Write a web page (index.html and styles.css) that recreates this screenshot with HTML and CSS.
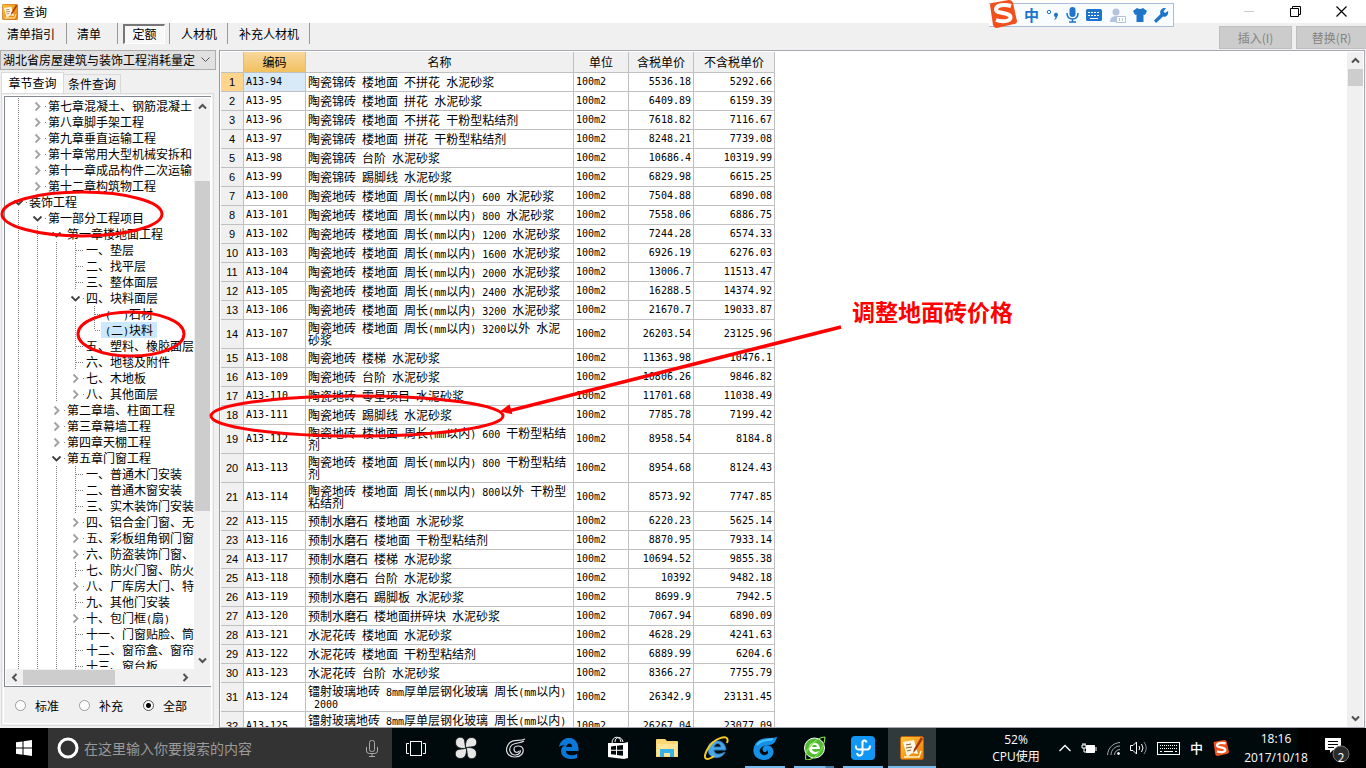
FILE: index.html
```html
<!DOCTYPE html>
<html lang="zh-CN">
<head>
<meta charset="utf-8">
<title>查询</title>
<link rel="stylesheet" href="styles.css">
</head>
<body>
<svg class="defs" aria-hidden="true">
  <defs>
    <linearGradient id="gold" x1="0" y1="0" x2="1" y2="1"><stop offset="0" stop-color="#ffc43a"/><stop offset="1" stop-color="#e97a06"/></linearGradient>
    <symbol id="app" viewBox="0 0 24 24">
      <rect x="0.5" y="0.5" width="23" height="23" rx="2" fill="url(#gold)" stroke="#b9600a"/>
      <path d="M3 6l11-2 4 14-6-1-5 4z" fill="#fff8e6"/>
      <path d="M6 9l5-1M6 12l6-1M7 15l4-1" stroke="#8a5a2a" stroke-width="1"/>
      <path d="M4 21h15l2-6" stroke="#fff3c0" stroke-width="1.5" fill="none"/>
      <path d="M21 1l-7 12-1 4 3-3 7-11z" fill="#a8350a"/>
    </symbol>
    <symbol id="sogou" viewBox="0 0 28 28">
      <path d="M1 5Q1 3 3 3L20 0q3 0 4 3l4 18q0 3-3 3L8 28q-3 0-4-3z" fill="#f1501b"/>
      <path d="M22 6C15 4 7 5 7 9.500S21 12 21.500 17 12 22 7 20" fill="none" stroke="#fff" stroke-width="4"/>
    </symbol>
    <symbol id="up" viewBox="0 0 9 9"><path d="M1 6.500L4.500 3 8 6.500" fill="none" stroke="#505050" stroke-width="2"/></symbol>
    <symbol id="down" viewBox="0 0 9 9"><path d="M1 2.500L4.500 6 8 2.500" fill="none" stroke="#505050" stroke-width="2"/></symbol>
    <symbol id="left" viewBox="0 0 9 9"><path d="M6.500 1L3 4.500 6.500 8" fill="none" stroke="#505050" stroke-width="2"/></symbol>
    <symbol id="right" viewBox="0 0 9 9"><path d="M2.500 1L6 4.500 2.500 8" fill="none" stroke="#505050" stroke-width="2"/></symbol>
  </defs>
</svg>

<header class="titlebar">
  <svg class="app-icon"><use href="#app"/></svg>
  <h1>查询</h1>
  <div class="window-buttons">
    <button aria-label="最小化"><svg width="11" height="11"><path d="M0 5.500h10" stroke="#ccc"/></svg></button>
    <button aria-label="还原"><svg width="11" height="11" fill="none" stroke="#000"><path d="M.5 2.500h8v8h-8zM2.500 2.500v-2h8v8h-2"/></svg></button>
    <button aria-label="关闭"><svg width="11" height="11"><path d="M.5.5l10 10M10.500.5l-10 10" stroke="#000" stroke-width="1.200"/></svg></button>
  </div>
</header>

<nav class="toolbar">
  <div class="modes">
    <div class="mode wide"><button>清单指引</button></div>
    <div class="mode"><button>清单</button></div>
    <div class="mode on"><button>定额</button></div>
    <div class="mode"><button>人材机</button></div>
    <div class="mode"><button>补充人材机</button></div>
  </div>
  <div class="actions">
    <button disabled>插入(I)</button>
    <button disabled>替换(R)</button>
  </div>
</nav>

<main>
  <aside>
    <div class="combo">
      <select aria-label="定额库"><option>湖北省房屋建筑与装饰工程消耗量定</option></select>
      <svg width="9" height="6"><path d="M.5.5l4 4 4-4" fill="none" stroke="#555"/></svg>
    </div>
    <div class="tabs"><button class="on">章节查询</button><button>条件查询</button></div>
    <section class="panel">
      <div class="treebox">
        <div class="tree" id="tree"></div>
        <div class="vbar">
          <svg class="arrow"><use href="#up"/></svg>
          <div class="track"><div class="space-a"></div><div class="thumb"></div><div class="space-b"></div></div>
          <svg class="arrow"><use href="#down"/></svg>
        </div>
        <div class="hbar"><svg class="arrow"><use href="#left"/></svg><div class="track"><div class="thumb"></div></div><svg class="arrow"><use href="#right"/></svg></div>
      </div>
      <div class="scope">
        <label><input type="radio" name="scope">标准</label>
        <label><input type="radio" name="scope">补充</label>
        <label><input type="radio" name="scope" checked>全部</label>
      </div>
    </section>
  </aside>
  <section class="grid">
    <div class="sheet">
      <table>
        <colgroup><col class="c-no"><col class="c-code"><col class="c-name"><col class="c-unit"><col class="c-tax"><col class="c-net"></colgroup>
        <thead><tr><th></th><th class="on">编码</th><th>名称</th><th>单位</th><th>含税单价</th><th>不含税单价</th></tr></thead>
        <tbody id="rows"></tbody>
      </table>
    </div>
    <div class="vbar">
      <svg class="arrow"><use href="#up"/></svg>
      <div class="track"><div class="thumb"></div></div>
      <svg class="arrow"><use href="#down"/></svg>
    </div>
  </section>
</main>

<footer class="taskbar">
  <button class="start" aria-label="开始"><svg width="16" height="16" fill="#fff"><path d="M0 2.300L6.500 1.400V7.500H0zM7.500 1.200L16 0v7.500H7.500zM0 8.500h6.500v6.200L0 13.800zM7.500 8.500H16V16l-8.500-1.200z"/></svg></button>
  <div class="search">
    <svg width="22" height="22"><circle cx="11" cy="11" r="9" fill="none" stroke="#fff" stroke-width="3"/></svg>
    <input type="text" aria-label="搜索" placeholder="在这里输入你要搜索的内容">
    <svg width="12" height="17" fill="none" stroke="#aaa"><rect x="3.500" y=".5" width="5" height="11" rx="2"/><path d="M.5 7v4q0 2.500 3 2.500h5q3 0 3-2.500V7M6 13.500v3M3 16.500h6"/></svg>
  </div>
  <div class="tools">
    <button aria-label="任务视图"><svg width="20" height="15" fill="none" stroke="#fff"><rect x="4.500" y=".5" width="11" height="14"/><path d="M3 2.500H.5v10H3M17 2.500h2.500v10H17"/></svg></button>
    <button aria-label="花瓣"><svg width="22" height="22" viewBox="0 0 22 22" fill="#e6e6e6" stroke="#000a0d" stroke-width=".8"><path d="M11 11C9 12 0 12 .5 5 1 0 5 0 7 .5 11 2 9 7 11 11z"/><path d="M11 11C10 9 10 0 17 .5c5 .5 5 4.500 4.500 6.500C20 11 15 9 11 11z"/><path d="M11 11c2-1 11-1 10.500 6-.5 5-4.500 5-6.500 4.500C11 20 13 15 11 11z"/><path d="M11 11c1 2 1 11-6 10.500C0 21 0 17 .5 15 2 11 7 13 11 11z"/></svg></button>
    <button aria-label="广联达"><svg width="20" height="20" fill="none" stroke="#ddd" stroke-width="1.200"><path d="M19 1C13 4 6 0 2 7s1 12 7 12 9-4 8-8-9-4-9 0 4 4 5 2M18 3c-4 3-10 1-13 5s0 9 4 9 6-3 5-5"/></svg></button>
  </div>
  <div class="apps">
    <button aria-label="Edge"><svg width="20" height="21"><path d="M0 9C2-3 19-4 19.500 11v2H7c0 5 7 5 11 3v4C9 23 2 19 2 13c0-3 2-5 4-6-3 0-5 1-6 2zm7 0h6c0-5-5-4-6 0z" fill="#0a78d7"/></svg></button>
    <button aria-label="应用商店"><svg width="22" height="24"><path d="M1 7h16l4-1v16l-4 1-16-2z" fill="#fff"/><path d="M5 7c0-7 8-8 9-1M8 6c0-6 7-6 8 0" fill="none" stroke="#fff"/><path d="M4 10.500l5-.7v4H4zM10 9.700l6-.8v4.900h-6zM4 14.800h5v4L4 18.200zM10 14.800h6v4.900l-6-.8z" fill="#000a0d"/></svg></button>
    <button aria-label="文件资源管理器"><svg width="22" height="19"><path d="M0 1q0-1 1-1h8l2 2h10q1 0 1 1v15H0z" fill="#fbd873"/><path d="M1 5h20v12H1z" fill="#ffe597"/><path d="M4 18V10h14v8h-4v-4H8v4z" fill="#38b0e8"/></svg></button>
    <button aria-label="Internet Explorer"><svg width="25" height="24"><path d="M4 13C4 3 21 1 22 14H10c0 5 6 5 11 2-3 8-17 8-17-3zm6-2h7c-1-5-6-4-7 0z" fill="#48a9e6" stroke="#2b79bd"/><path d="M23 7C27-4 9 2 3 14c-5 10 0 11 7 6" fill="none" stroke="#f4c82b" stroke-width="2"/></svg></button>
    <button class="running" aria-label="广联达服务"><svg width="24" height="23"><path d="M24 0C18 2 8-1 3 6s-3 16 7 17 14-10 7-14c-4-2-9 1-7 5 1 2 4 1 4-1 3 3-1 6-4 5-8-4 0-11 6-10 4 0 7-3 8-8z" fill="#1590e8"/><path d="M4 8c4-6 11-4 16-6" stroke="#46c4ff" stroke-width="2" fill="none"/></svg></button>
    <button class="running split" aria-label="360浏览器"><svg width="23" height="24"><circle cx="11.500" cy="12" r="10" fill="#52b931" stroke="#fff"/><path d="M6 12c0-7 11-7 11 1H9c1 4 5 3 7 2-2 5-10 4-10-3zm3-1h5c-1-3-4-3-5 0z" fill="#fff"/><path d="M3 24C0 14 14 1 22 1M3 24c9 0 18-10 19-23" fill="none" stroke="#7be34a" stroke-width="1.200"/></svg></button>
    <button class="running" aria-label="云计价"><svg width="24" height="24"><rect width="24" height="24" rx="4" fill="#1296f5"/><path d="M15.500 6.500Q15 4 13 4.500T11.500 8v8q0 3-2.500 3.500T6 17M5 9.500q-1 4 3 4h8q3 0 3-4" fill="none" stroke="#fff" stroke-width="2"/></svg></button>
    <button class="running current" aria-label="查询"><svg width="24" height="24"><use href="#app"/></svg></button>
  </div>
  <div class="tray">
    <div class="stat">52%<br>CPU使用</div>
    <div class="icons">
      <svg width="12" height="8"><path d="M.5 7L6 1.500 11.500 7" fill="none" stroke="#fff" stroke-width="1.300"/></svg>
      <svg width="16" height="12"><path d="M5.500 3.500h8v7h-8z" fill="#fff" stroke="#fff"/><path d="M15 5v4M1 3h4v3H1zM2 1v2M4 1v2M3 6v4h3" fill="none" stroke="#fff"/></svg>
      <svg width="13" height="13" fill="none" stroke="#aaa"><path d="M.5 13C1 6 6 1 13 .5M4 13c0-5 4-9 9-9M7.500 13c0-3 2.500-5.500 5.500-5.500"/><circle cx="11.500" cy="11.500" r="1" fill="#fff" stroke="#fff"/></svg>
      <svg width="17" height="14" fill="none" stroke="#fff"><path d="M.5 4.500H3L6.500 1v12L3 9.500H.5zM9 5q1.500 2 0 4M11.500 3q3 4 0 8"/><path d="M14 1q4.500 6 0 12" stroke="#888"/></svg>
      <svg width="23" height="13" fill="none" stroke="#fff"><rect x=".5" y=".5" width="22" height="12"/><path d="M3 3.500h17M3 6.500h17" stroke-dasharray="1 1"/><path d="M3 9.500h2M7 9.500h9M18 9.500h2"/></svg>
      <span class="lang">中</span>
      <svg width="16" height="16"><use href="#sogou"/></svg>
    </div>
    <div class="stat clock">18:16<br>2017/10/18</div>
    <button class="notice" aria-label="通知"><svg width="26" height="26"><path d="M0 0h16v12H8l-3 3v-3H0z" fill="#fff"/><path d="M3 3.500h10M3 6.500h10M3 9.500h6" stroke="#000"/><circle cx="16" cy="16" r="8" fill="#2b2b2b" stroke="#777"/></svg><span>2</span></button>
  </div>
</footer>

<div class="ime">
  <svg class="ime-logo"><use href="#sogou"/></svg>
  <span class="ime-lang">中</span>
  <svg width="13" height="12"><circle cx="3" cy="3" r="1.700" fill="none" stroke="#1e74c9"/><path d="M8 6a2 2 0 1 1 3.500 1Q11 10 8 11q1.500-2 1.500-3Q8 8 8 6z" fill="#1e74c9"/></svg>
  <svg width="13" height="16"><rect x="3.500" width="6" height="10" rx="3" fill="#1e74c9"/><path d="M1 6q0 6 5.500 6T12 6M6.500 12v3M3 15h7" fill="none" stroke="#1e74c9" stroke-width="1.500"/></svg>
  <svg width="17" height="12"><rect width="16" height="12" rx="1.500" fill="#1e74c9"/><path d="M2 3.500h12M2 6.500h12" stroke="#fff" stroke-dasharray="2 1"/><path d="M4 9.500h8" stroke="#fff"/></svg>
  <svg width="16" height="15"><circle cx="6" cy="4" r="3.500" fill="#b4c3dc"/><path d="M0 14q0-6 6-6 4 0 5 2v4z" fill="#b4c3dc"/><path d="M6.500 8.500h9v6h-9z" fill="#fff" stroke="#b4c3dc"/><path d="M9.500 10v3M12.500 10v3" stroke="#b4c3dc"/></svg>
  <svg width="14" height="14"><path d="M4 0q3 2 6 0l4 3-2 4-1.500-.5V14h-7V6.500L2 7 0 3z" fill="#1e74c9"/></svg>
  <svg width="15" height="15"><path d="M14 3l-3 2-1.500-1.500L12 0C8-1 5 3 6.500 6L0 12.500 2 15l7-6.500c3 1 6-1.500 5-5.500z" fill="#1e74c9"/></svg>
</div>

<svg class="marks" aria-hidden="true" fill="none" stroke="#f00" stroke-width="3">
  <ellipse cx="82" cy="214" rx="80" ry="22"/>
  <ellipse cx="131" cy="334" rx="53" ry="22"/>
  <ellipse cx="357" cy="416" rx="146" ry="20"/>
  <path d="M841 327L508 411" stroke-width="3.500"/>
  <path d="M502 411l7-5 2 7z" fill="#f00" stroke-width="2"/>
</svg>
<p class="note">调整地面砖价格</p>
<script src="app.js"></script>
</body>
</html>
```
FILE: styles.css
```css
* { box-sizing: border-box; }
body { margin: 0; height: 100vh; display: flex; flex-direction: column; overflow: hidden; background: #f0f0f0; color: #000; font: 12px/16px "Noto Sans CJK SC", sans-serif; }
button, input, select { font: inherit; color: inherit; margin: 0; padding: 0; border: 0; background: none; }
svg { display: block; flex: none; }
.defs { position: absolute; width: 0; height: 0; }

.titlebar { display: flex; align-items: center; height: 23px; padding: 0 2px; background: #fff; gap: 5px; }
.titlebar h1 { margin: 0; font: 12px/16px "Noto Sans CJK SC", sans-serif; }
.app-icon { width: 16px; height: 16px; }
.window-buttons { margin-left: auto; display: flex; }
.window-buttons button { width: 46px; height: 20px; display: grid; place-items: center; }

.toolbar { display: flex; justify-content: space-between; height: 27px; }
.modes { display: flex; height: 21px; }
.mode { padding: 0 16px 0 10px; border-right: 1px solid #999; display: flex; align-items: center; }
.mode.wide { padding: 0 11px 0 7px; }
.mode.on { padding: 0 4px 0 5px; }
.mode.on button { width: 42px; height: 20px; border: 1px solid #fff; border-top: 2px solid #777; border-left: 2px solid #777; background: #f8f8f8; }
.mode.on ~ .mode { padding: 0 10px 0 11px; }
.actions { display: flex; gap: 4px; padding-top: 3px; }
.actions button { width: 73px; height: 23px; border: 1px solid #bfbfbf; background: #ccc; color: #838383; }
.actions button:last-child { width: 70px; border-right: 0; }

main { flex: 1; min-height: 0; display: flex; gap: 3px; }
aside { width: 216px; display: flex; flex-direction: column; min-height: 0; }
.combo { height: 20px; border: 1px solid #adadad; background: #e1e1e1; display: flex; align-items: center; padding: 0 5px 0 2px; }
.combo select { appearance: none; flex: 1; min-width: 0; height: 18px; outline: 0; }
.tabs { display: flex; align-items: flex-end; height: 23px; padding-left: 1px; }
.tabs button { width: 57px; height: 19px; border: 1px solid #d9d9d9; border-bottom: 0; border-left: 0; }
.tabs .on { width: 63px; height: 21px; border: 1px solid #d9d9d9; border-bottom: 0; background: #fff; }
.panel { flex: 1; min-height: 0; display: flex; flex-direction: column; margin: 0 2px 2px 1px; border: 1px solid #dcdcdc; outline: 1px solid #fff; outline-offset: -3px; padding: 2px 1px 0 2px; }
.treebox { flex: 1; min-height: 0; border: 1px solid #828790; background: #fff; padding: 1px; display: grid; grid-template: minmax(0, 1fr) 16px / minmax(0, 1fr) 16px; }
.tree { overflow: hidden; padding-left: 3px; }
.row { display: flex; height: 16px; white-space: nowrap; }
.cell { flex: none; width: 19px; height: 16px; display: block; }
.label { padding: 0 1px; }
.label.sel { margin-left: -3px; padding: 0 4px; background: #cce8ff; }
.half { font: 10px/1 "DejaVu Sans Mono", monospace; line-height: 0; }
.vbar { display: flex; flex-direction: column; align-items: center; background: #f0f0f0; }
.arrow { width: 9px; height: 17px; }
.vbar .track { flex: 1; width: 15px; display: flex; flex-direction: column; }
.treebox .thumb { background: #cdcdcd; flex: 329; }
.space-a { flex: 66; }
.space-b { flex: 141; }
.hbar { grid-column: 1 / 3; display: flex; align-items: center; background: #f0f0f0; padding: 0 20px 0 4px; }
.hbar .track { flex: 1; display: flex; margin: 0 4px; }
.hbar .thumb { flex: none; width: 60%; height: 15px; }
.scope { display: flex; height: 37px; margin-bottom: 1px; align-items: center; padding-left: 11px; gap: 17px; }
.scope label { display: flex; align-items: center; gap: 9px; width: 47px; white-space: nowrap; }
.scope input { appearance: none; flex: none; width: 11px; height: 11px; border: 1px solid #999; border-radius: 50%; background: #fff; }
.scope input:checked { background: radial-gradient(circle, #000 0 2px, #fff 3px); border-color: #555; }

.grid { flex: 1; min-width: 0; margin-right: 1px; border: 1px solid #a8a8b0; border-left: 1px solid #999; background: #fff; padding: 1px 1px 0; display: flex; }
.sheet { flex: 1; overflow: hidden; }
.grid .vbar { width: 16px; }
.grid .thumb { height: 17px; background: #cdcdcd; }
table { table-layout: fixed; width: 554px; border-spacing: 0; line-height: 12px; }
.c-no { width: 23px; } .c-code { width: 62px; } .c-name { width: 268px; } .c-unit { width: 55px; } .c-tax { width: 65px; } .c-net { width: 81px; }
tr { height: 19px; }
thead tr { height: 21px; }
th, td { border: solid #c0c0c0; border-width: 0 1px 1px 0; padding: 2px 1px 2px 2px; font-weight: 400; }
th { background: #f0f0f0; padding: 0; text-align: center; }
thead .on { background: linear-gradient(#f9d79c, #f1c15f); }
td { font: 10px/12px "DejaVu Sans Mono", monospace; white-space: nowrap; }
tbody th { font: 11px/12px "Liberation Sans", sans-serif; }
tbody .on { background: #ffd58d; }
td.cur { background: #d8e9f8; }
td.name { font: 12px/12px "Noto Sans CJK SC", sans-serif; white-space: pre; }
td.price { text-align: right; padding-right: 2px; }

.taskbar { flex: none; display: flex; height: 40px; background: linear-gradient(to left, #000 69px, #000a0d 69px); color: #fff; }
.taskbar button { width: 48px; height: 40px; display: grid; place-items: center; }
.start { background: #000; }
.search { width: 344px; background: #333; display: flex; align-items: center; padding: 0 14px 0 9px; gap: 5px; }
.search input { flex: 1; min-width: 0; font-size: 14px; line-height: 20px; outline: 0; }
.search input::placeholder { color: #9a9a9a; opacity: 1; }
.tools { display: flex; gap: 2px; margin-right: 5px; }
.apps { display: flex; gap: 1px; }
.running { position: relative; }
.running::after { content: ""; position: absolute; left: 4px; right: 4px; bottom: 0; height: 2px; background: #76b9ed; }
.split::after { background: linear-gradient(to left, #4b7aa5 8px, #76b9ed 9px); }
.taskbar .current { background: #30393c; }
.current::after { left: 0; right: 0; }
.tray { margin-left: auto; display: flex; align-items: center; }
.stat { text-align: center; line-height: 17px; width: 56px; font-family: "Open Sans", "Noto Sans CJK SC", sans-serif; }
.icons { display: flex; align-items: center; gap: 10px; margin: 0 13px 0 15px; }
.lang { width: 13px; font-size: 13px; font-weight: 500; }
.clock { width: 68px; line-height: 19px; margin-right: 10px; }
.taskbar .notice { width: 46px; position: relative; padding: 6px 0 0 5px; place-items: center start; }
.notice span { position: absolute; left: 17px; top: 22px; width: 8px; text-align: center; line-height: 14px; }

.ime { position: absolute; left: 989px; top: 3px; width: 185px; height: 24px; border: 1px solid #a9bdda; background: #f8fbff; display: flex; align-items: center; padding: 0 4px 0 0; justify-content: space-between; border-left: 0; }
.ime-logo { width: 28px; height: 28px; margin-top: -3px; }
.ime-lang { width: 15px; color: #1e74c9; font-size: 15px; font-weight: 700; }
.marks { position: absolute; left: 0; top: 0; width: 1100px; height: 500px; pointer-events: none; }
.note { position: absolute; left: 852px; top: 298px; margin: 0; color: #f00; font: bold 23px/26px "Noto Sans CJK SC", sans-serif; }
```
FILE: app.js
```javascript
// [level, kind, label]; kind: ">" collapsed, "v" expanded, "-" leaf, "L" last leaf
const nodes = [
  [1, ">", "第七章混凝土、钢筋混凝土"], [1, ">", "第八章脚手架工程"], [1, ">", "第九章垂直运输工程"],
  [1, ">", "第十章常用大型机械安拆和"], [1, ">", "第十一章成品构件二次运输"], [1, ">", "第十二章构筑物工程"],
  [0, "v", "装饰工程"], [1, "v", "第一部分工程项目"], [2, "v", "第一章楼地面工程"],
  [3, "-", "一、垫层"], [3, "-", "二、找平层"], [3, "-", "三、整体面层"], [3, "v", "四、块料面层"],
  [4, "-", "(一)石材"], [4, "L", "(二)块料"], [3, "-", "五、塑料、橡胶面层"], [3, "-", "六、地毯及附件"],
  [3, ">", "七、木地板"], [3, ">", "八、其他面层"], [2, ">", "第二章墙、柱面工程"], [2, ">", "第三章幕墙工程"],
  [2, ">", "第四章天棚工程"], [2, "v", "第五章门窗工程"], [3, "-", "一、普通木门安装"], [3, "-", "二、普通木窗安装"],
  [3, "-", "三、实木装饰门安装"], [3, ">", "四、铝合金门窗、无"], [3, ">", "五、彩板组角钢门窗"], [3, ">", "六、防盗装饰门窗、"],
  [3, "-", "七、防火门窗、防火"], [3, ">", "八、厂库房大门、特"], [3, "-", "九、其他门安装"], [3, ">", "十、包门框(扇)"],
  [3, "-", "十一、门窗贴脸、筒"], [3, "-", "十二、窗帘盒、窗帘"], [3, "-", "十三、窗台板"]
];
const art = {
  "|": '<path d="M9.5 0v16" stroke="#808080" stroke-dasharray="1 1"/>',
  "-": '<path d="M9.5 0v16M10 8.500h8" stroke="#808080" stroke-dasharray="1 1"/>',
  "L": '<path d="M9.5 0v8M10 8.500h8" stroke="#808080" stroke-dasharray="1 1"/>',
  ">": '<path d="M7.500 4.500l4 4-4 4" fill="none" stroke="#a0a0a0" stroke-width="1.800"/><path d="M17 8.500h1" stroke="#808080"/>',
  "v": '<path d="M5.500 6.500l4 4 4-4" fill="none" stroke="#404040" stroke-width="1.800"/><path d="M17 8.500h1" stroke="#808080"/>'
};
const cell = k => `<svg class="cell">${art[k]}</svg>`;
const half = s => s.replace(/[\x20-\x7e]+/g, m => `<span class="half">${m}</span>`);
document.getElementById("tree").innerHTML = nodes.map(([lv, kind, text]) =>
  `<div class="row">${cell("|").repeat(lv)}${cell(kind)}<span class="label${kind === "L" ? " sel" : ""}">${half(text)}</span></div>`).join("");

const items = [
  ["陶瓷锦砖 楼地面 不拼花 水泥砂浆", "5536.18", "5292.66"],
  ["陶瓷锦砖 楼地面 拼花 水泥砂浆", "6409.89", "6159.39"],
  ["陶瓷锦砖 楼地面 不拼花 干粉型粘结剂", "7618.82", "7116.67"],
  ["陶瓷锦砖 楼地面 拼花 干粉型粘结剂", "8248.21", "7739.08"],
  ["陶瓷锦砖 台阶 水泥砂浆", "10686.4", "10319.99"],
  ["陶瓷锦砖 踢脚线 水泥砂浆", "6829.98", "6615.25"],
  ["陶瓷地砖 楼地面 周长(mm以内) 600 水泥砂浆", "7504.88", "6890.08"],
  ["陶瓷地砖 楼地面 周长(mm以内) 800 水泥砂浆", "7558.06", "6886.75"],
  ["陶瓷地砖 楼地面 周长(mm以内) 1200 水泥砂浆", "7244.28", "6574.33"],
  ["陶瓷地砖 楼地面 周长(mm以内) 1600 水泥砂浆", "6926.19", "6276.03"],
  ["陶瓷地砖 楼地面 周长(mm以内) 2000 水泥砂浆", "13006.7", "11513.47"],
  ["陶瓷地砖 楼地面 周长(mm以内) 2400 水泥砂浆", "16288.5", "14374.92"],
  ["陶瓷地砖 楼地面 周长(mm以内) 3200 水泥砂浆", "21670.7", "19033.87"],
  ["陶瓷地砖 楼地面 周长(mm以内) 3200以外 水泥\n砂浆", "26203.54", "23125.96"],
  ["陶瓷地砖 楼梯 水泥砂浆", "11363.98", "10476.1"],
  ["陶瓷地砖 台阶 水泥砂浆", "10806.26", "9846.82"],
  ["陶瓷地砖 零星项目 水泥砂浆", "11701.68", "11038.49"],
  ["陶瓷地砖 踢脚线 水泥砂浆", "7785.78", "7199.42"],
  ["陶瓷地砖 楼地面 周长(mm以内) 600 干粉型粘结\n剂", "8958.54", "8184.8"],
  ["陶瓷地砖 楼地面 周长(mm以内) 800 干粉型粘结\n剂", "8954.68", "8124.43"],
  ["陶瓷地砖 楼地面 周长(mm以内) 800以外 干粉型\n粘结剂", "8573.92", "7747.85"],
  ["预制水磨石 楼地面 水泥砂浆", "6220.23", "5625.14"],
  ["预制水磨石 楼地面 干粉型粘结剂", "8870.95", "7933.14"],
  ["预制水磨石 楼梯 水泥砂浆", "10694.52", "9855.38"],
  ["预制水磨石 台阶 水泥砂浆", "10392", "9482.18"],
  ["预制水磨石 踢脚板 水泥砂浆", "8699.9", "7942.5"],
  ["预制水磨石 楼地面拼碎块 水泥砂浆", "7067.94", "6890.09"],
  ["水泥花砖 楼地面 水泥砂浆", "4628.29", "4241.63"],
  ["水泥花砖 楼地面 干粉型粘结剂", "6889.99", "6204.6"],
  ["水泥花砖 台阶 水泥砂浆", "8366.27", "7755.79"],
  ["镭射玻璃地砖 8mm厚单层钢化玻璃 周长(mm以内)\n 2000", "26342.9", "23131.45"],
  ["镭射玻璃地砖 8mm厚单层钢化玻璃 周长(mm以内)\n 2400", "26267.04", "23077.09"]
];
document.getElementById("rows").innerHTML = items.map(([name, tax, net], i) =>
  `<tr><th${i ? "" : ' class="on"'}>${i + 1}</th><td${i ? "" : ' class="cur"'}>A13-${i + 94}</td><td class="name">${half(name)}</td><td>100m2</td><td class="price">${tax}</td><td class="price">${net}</td></tr>`).join("");
```
